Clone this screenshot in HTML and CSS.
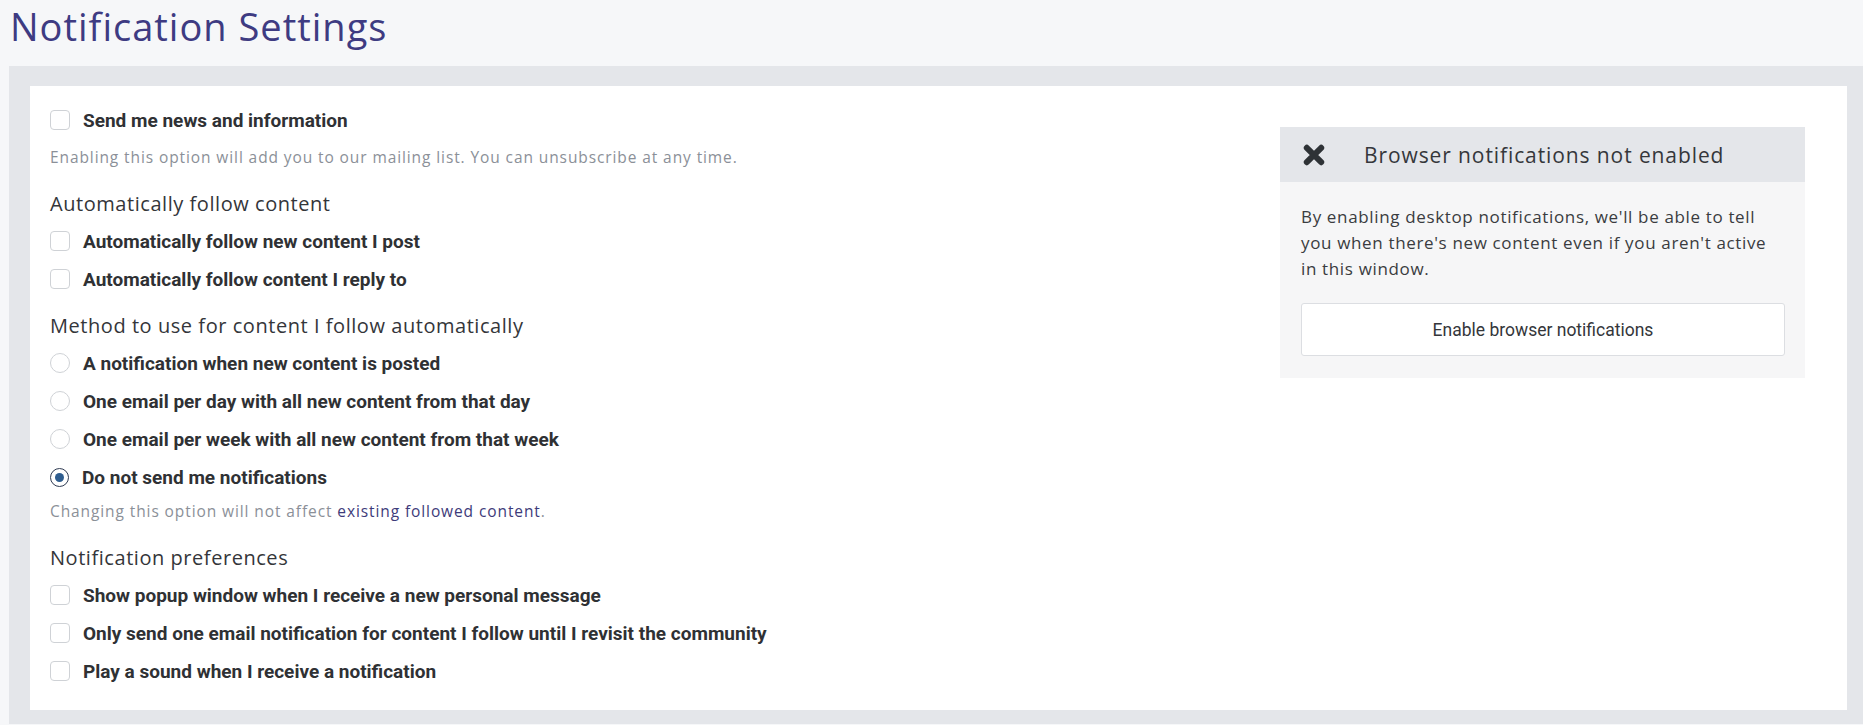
FILE: index.html
```html
<!DOCTYPE html>
<html lang="en">
<head>
<meta charset="utf-8">
<title>Notification Settings</title>
<link rel="stylesheet" href="styles.css">
</head>
<body>
<h1 class="page-title">Notification Settings</h1>
<div class="frame">
  <div class="card">
    <div class="form">
      <label class="opt"><span class="box"></span><span class="opt-text">Send me news and information</span></label>
      <p class="help">Enabling this option will add you to our mailing list. You can unsubscribe at any time.</p>

      <h2 class="section">Automatically follow content</h2>
      <label class="opt"><span class="box"></span><span class="opt-text">Automatically follow new content I post</span></label>
      <label class="opt"><span class="box"></span><span class="opt-text">Automatically follow content I reply to</span></label>

      <h2 class="section">Method to use for content I follow automatically</h2>
      <label class="opt"><span class="radio"></span><span class="opt-text">A notification when new content is posted</span></label>
      <label class="opt"><span class="radio"></span><span class="opt-text">One email per day with all new content from that day</span></label>
      <label class="opt"><span class="radio"></span><span class="opt-text">One email per week with all new content from that week</span></label>
      <label class="opt"><span class="radio checked"></span><span class="opt-text">Do not send me notifications</span></label>
      <p class="help help-tight">Changing this option will not affect <a class="link" href="#">existing followed content</a>.</p>

      <h2 class="section">Notification preferences</h2>
      <label class="opt"><span class="box"></span><span class="opt-text">Show popup window when I receive a new personal message</span></label>
      <label class="opt"><span class="box"></span><span class="opt-text">Only send one email notification for content I follow until I revisit the community</span></label>
      <label class="opt"><span class="box"></span><span class="opt-text">Play a sound when I receive a notification</span></label>
    </div>

    <aside class="panel">
      <div class="panel-head">
        <svg class="x-icon" viewBox="0 0 24 24" width="24" height="24" aria-hidden="true">
          <path d="M4.8 4.8 L19.2 19.2 M19.2 4.8 L4.8 19.2" stroke="#2e3236" stroke-width="6" stroke-linecap="round"/>
        </svg>
        <span class="panel-title">Browser notifications not enabled</span>
      </div>
      <div class="panel-body">
        <p class="panel-text">By enabling desktop notifications, we'll be able to tell you when there's new content even if you aren't active in this window.</p>
        <button class="btn" type="button">Enable browser notifications</button>
      </div>
    </aside>
  </div>
</div>
</body>
</html>
```
FILE: styles.css
```css
html, body {
  margin: 0;
  padding: 0;
}
body {
  background: #f6f7f9;
  font-family: "Open Sans", "Noto Sans", sans-serif;
  color: #333;
  overflow: hidden;
}
.page-title {
  margin: 0;
  padding: 0 0 0 10px;
  height: 66px;
  line-height: 52px;
  font-family: "Open Sans", sans-serif;
  font-weight: 400;
  font-size: 38px;
  letter-spacing: 1px;
  color: #3e3b82;
}
.frame {
  margin-left: 9px;
  margin-right: -5px;
  background: #e4e6ea;
  padding: 20px 21px 14px 21px;
}
.card {
  background: #fff;
  display: grid;
  grid-template-columns: 1fr 525px;
  column-gap: 20px;
  padding: 15px 42px 20px 20px;
}
.form {
  display: flex;
  flex-direction: column;
}
.opt {
  display: flex;
  align-items: center;
  height: 38px;
  font-family: Roboto, sans-serif;
  font-weight: 700;
  font-size: 19px;
  color: #2f3134;
}
.box {
  width: 18px;
  height: 18px;
  border: 1px solid #cfd2d6;
  border-radius: 4px;
  margin-right: 13px;
  flex: none;
  background: #fff;
}
.radio {
  width: 18px;
  height: 18px;
  border: 1px solid #cfd2d6;
  border-radius: 50%;
  margin-right: 13px;
  flex: none;
  box-sizing: content-box;
  display: flex;
  align-items: center;
  justify-content: center;
}
.radio.checked {
  border: 1.5px solid #2f3b52;
  width: 17px;
  height: 17px;
}
.radio.checked::after {
  content: "";
  width: 9px;
  height: 9px;
  border-radius: 50%;
  background: #2e5d8f;
}
.help {
  margin: 8px 0 9px 0;
  line-height: 20px;
  font-size: 15.5px;
  letter-spacing: 0.9px;
  color: #8b9098;
}
.help-tight {
  margin-top: 5px;
}
.link {
  color: #3e3b7a;
  text-decoration: none;
}
.section {
  margin: 14px 0 4px 0;
  line-height: 28px;
  font-size: 20px;
  font-weight: 500;
  color: #34363a;
  letter-spacing: 0.55px;
}
.panel {
  margin-top: 26px;
  align-self: start;
  background: #f6f6f7;
}
.panel-head {
  height: 55px;
  background: #e4e6ea;
  display: flex;
  align-items: center;
  padding-left: 22px;
}
.x-icon {
  flex: none;
}
.panel-title {
  margin-left: 38px;
  font-size: 21px;
  color: #35373b;
  letter-spacing: 0.9px;
}
.panel-body {
  padding: 22px 20px 22px 21px;
}
.panel-text {
  margin: 0;
  font-size: 17px;
  line-height: 26px;
  letter-spacing: 0.65px;
  color: #3a3c40;
}
.btn {
  margin-top: 21px;
  width: 100%;
  height: 53px;
  background: #fff;
  border: 1px solid #dcdee2;
  border-radius: 3px;
  font-family: Roboto, sans-serif;
  font-size: 17.5px;
  color: #34363a;
}
```
